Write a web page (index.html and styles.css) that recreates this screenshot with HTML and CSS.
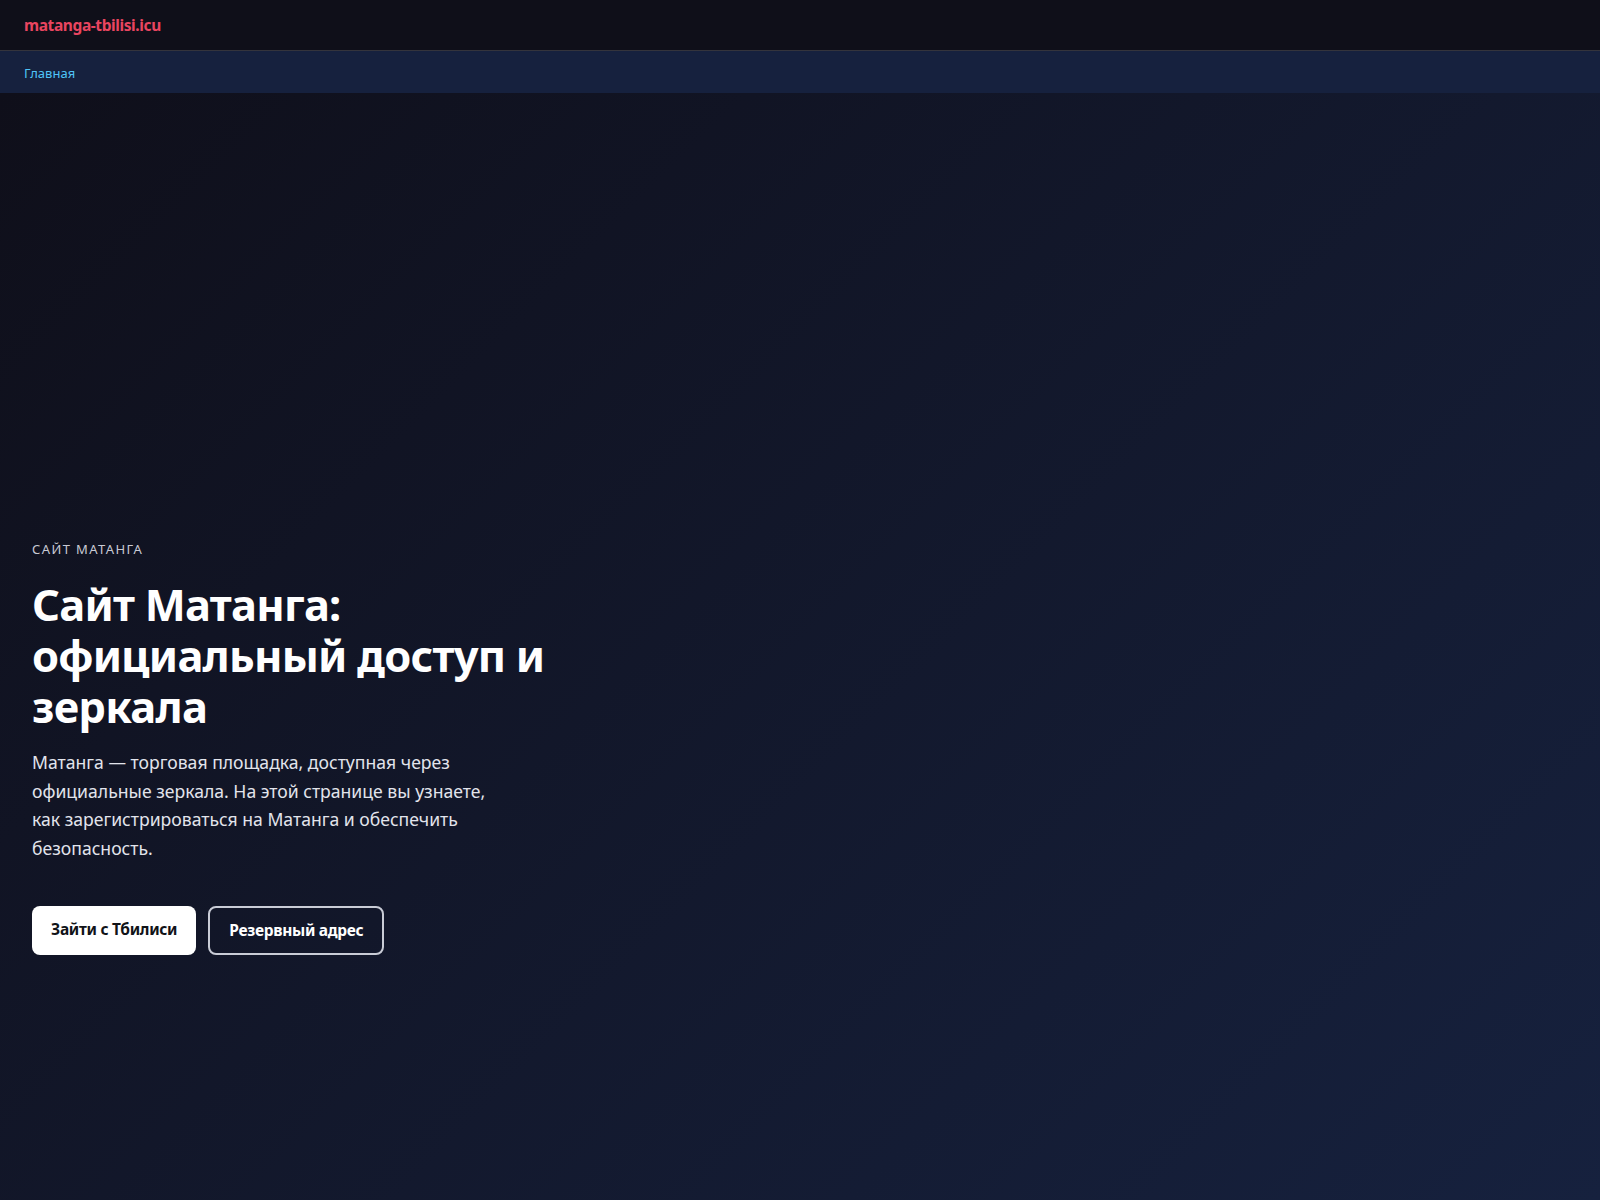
FILE: index.html
```html
<!DOCTYPE html>
<html lang="ru">
<head>
<meta charset="utf-8">
<title>Сайт Матанга: официальный доступ и зеркала</title>
<link rel="stylesheet" href="styles.css">
</head>
<body>
<header class="topbar">
  <a class="brand" href="#">matanga-tbilisi.icu</a>
</header>
<nav class="crumbs">
  <a class="crumbs__link" href="#">Главная</a>
</nav>
<main class="hero">
  <div class="hero__inner">
    <p class="hero__eyebrow">САЙТ МАТАНГА</p>
    <h1 class="hero__title">Сайт Матанга: официальный доступ и зеркала</h1>
    <p class="hero__lead">Матанга — торговая площадка, доступная через официальные зеркала. На этой странице вы узнаете, как зарегистрироваться на Матанга и обеспечить безопасность.</p>
    <div class="hero__actions">
      <a class="btn btn--solid" href="#">Зайти с Тбилиси</a>
      <a class="btn btn--outline" href="#">Резервный адрес</a>
    </div>
  </div>
</main>
</body>
</html>
```

FILE: styles.css
```css
* { box-sizing: border-box; }

html, body {
  margin: 0;
  padding: 0;
}

body {
  font-family: "Noto Sans", "Open Sans", "DejaVu Sans", sans-serif;
  background: #0f0f1a;
  color: #ffffff;
  min-height: 1200px;
  display: flex;
  flex-direction: column;
}

a { text-decoration: none; }

.topbar {
  height: 51px;
  padding: 0 24px;
  display: flex;
  align-items: center;
  background: #0f0f19;
  border-bottom: 1px solid #34343c;
}

.brand {
  color: #e94560;
  font-weight: 700;
  font-size: 15.5px;
  letter-spacing: -0.4px;
}

.crumbs {
  height: 42px;
  padding: 0 24px;
  display: flex;
  align-items: center;
  background: #16213e;
}

.crumbs__link {
  color: #4fc3f7;
  font-size: 13px;
  margin-top: 2px;
}

.hero {
  flex: 1;
  background: linear-gradient(135deg, #0f0f1a 0%, #16213e 100%);
  padding: 446px 32px 0;
}

.hero__inner {
  max-width: 560px;
}

.hero__eyebrow {
  margin: 0 0 20px;
  font-size: 13px;
  letter-spacing: 1.4px;
  color: #c9cad4;
  line-height: 20px;
}

.hero__title {
  margin: 0 0 16px;
  font-size: 43.5px;
  line-height: 51px;
  font-weight: 700;
  letter-spacing: -0.75px;
  max-width: 545px;
}

.hero__lead {
  margin: 0;
  max-width: 470px;
  font-size: 17.6px;
  line-height: 28.7px;
  color: #e2e4ec;
}

.hero__actions {
  display: flex;
  gap: 12px;
  margin-top: 43px;
}

.btn {
  display: inline-flex;
  align-items: center;
  height: 49px;
  padding: 0 19px;
  border-radius: 8px;
  font-size: 15.5px;
  font-weight: 700;
  letter-spacing: -0.3px;
}

.btn--solid {
  background: #ffffff;
  color: #111318;
  padding-bottom: 3px;
}

.btn--outline {
  border: 2px solid #c9ccd6;
  color: #ffffff;
}
```
